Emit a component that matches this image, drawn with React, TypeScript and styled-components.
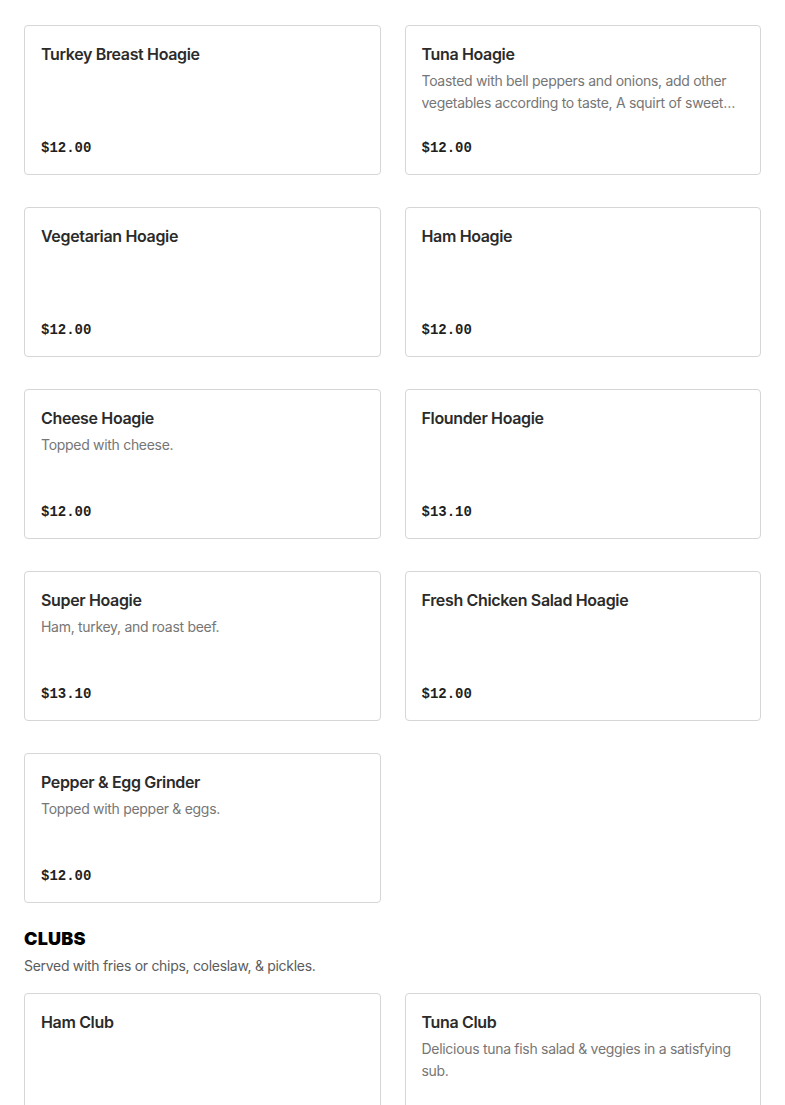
import styled, { createGlobalStyle } from "styled-components";

const GlobalStyle = createGlobalStyle`
  body {
    margin: 0;
    background: #ffffff;
    font-family: Inter, "Noto Sans", sans-serif;
    color: #2b2b2b;
  }
`;

const Page = styled.div`
  padding: 25px 24px 40px;
`;

const Section = styled.section`
  & + & {
    margin-top: 24px;
  }
`;

const SectionTitle = styled.h2`
  margin: 0;
  font-family: Inter, "Liberation Sans", sans-serif;
  font-size: 18px;
  font-weight: 900;
  line-height: 24px;
  letter-spacing: 0.2px;
  color: #000000;
  text-transform: uppercase;
`;

const SectionNote = styled.p`
  margin: 4px 0 16px;
  font-size: 14px;
  line-height: 22px;
  letter-spacing: -0.3px;
  color: #5c5c5c;
`;

const Grid = styled.div`
  display: grid;
  grid-template-columns: repeat(2, 1fr);
  column-gap: 24px;
  row-gap: 32px;
`;

const Card = styled.div`
  display: flex;
  flex-direction: column;
  height: 150px;
  box-sizing: border-box;
  padding: 16px 16px 16px;
  border: 1px solid #d6d6d6;
  border-radius: 4px;
  background: #fff;
`;

const ItemName = styled.h3`
  margin: 0;
  font-size: 16px;
  font-weight: 600;
  line-height: 24px;
  letter-spacing: -0.35px;
  color: #2b2b2b;
`;

const ItemDesc = styled.p`
  margin: 4px 0 0;
  font-size: 14px;
  line-height: 22px;
  letter-spacing: -0.3px;
  color: #767676;
  display: -webkit-box;
  -webkit-line-clamp: 2;
  -webkit-box-orient: vertical;
  overflow: hidden;
`;

const Price = styled.span`
  margin-top: auto;
  font-family: "Liberation Mono", "DejaVu Sans Mono", monospace;
  font-size: 14px;
  font-weight: 700;
  line-height: 20px;
  color: #1f1f1f;
`;

type Item = { name: string; desc?: string; price: string };

const hoagies: Item[] = [
  { name: "Turkey Breast Hoagie", price: "$12.00" },
  {
    name: "Tuna Hoagie",
    desc: "Toasted with bell peppers and onions, add other vegetables according to taste, A squirt of sweet and tangy sauce to finish.",
    price: "$12.00",
  },
  { name: "Vegetarian Hoagie", price: "$12.00" },
  { name: "Ham Hoagie", price: "$12.00" },
  { name: "Cheese Hoagie", desc: "Topped with cheese.", price: "$12.00" },
  { name: "Flounder Hoagie", price: "$13.10" },
  { name: "Super Hoagie", desc: "Ham, turkey, and roast beef.", price: "$13.10" },
  { name: "Fresh Chicken Salad Hoagie", price: "$12.00" },
  { name: "Pepper & Egg Grinder", desc: "Topped with pepper & eggs.", price: "$12.00" },
];

const clubs: Item[] = [
  { name: "Ham Club", price: "$12.00" },
  {
    name: "Tuna Club",
    desc: "Delicious tuna fish salad & veggies in a satisfying sub.",
    price: "$12.00",
  },
];

function MenuCard({ name, desc, price }: Item) {
  return (
    <Card>
      <ItemName>{name}</ItemName>
      {desc && <ItemDesc>{desc}</ItemDesc>}
      <Price>{price}</Price>
    </Card>
  );
}

export default function App() {
  return (
    <>
      <GlobalStyle />
      <Page>
        <Section>
          <Grid>
            {hoagies.map((item, index) => (
              <MenuCard key={index} {...item} />
            ))}
          </Grid>
        </Section>
        <Section>
          <SectionTitle>Clubs</SectionTitle>
          <SectionNote>Served with fries or chips, coleslaw, &amp; pickles.</SectionNote>
          <Grid>
            {clubs.map((item, index) => (
              <MenuCard key={index} {...item} />
            ))}
          </Grid>
        </Section>
      </Page>
    </>
  );
}
